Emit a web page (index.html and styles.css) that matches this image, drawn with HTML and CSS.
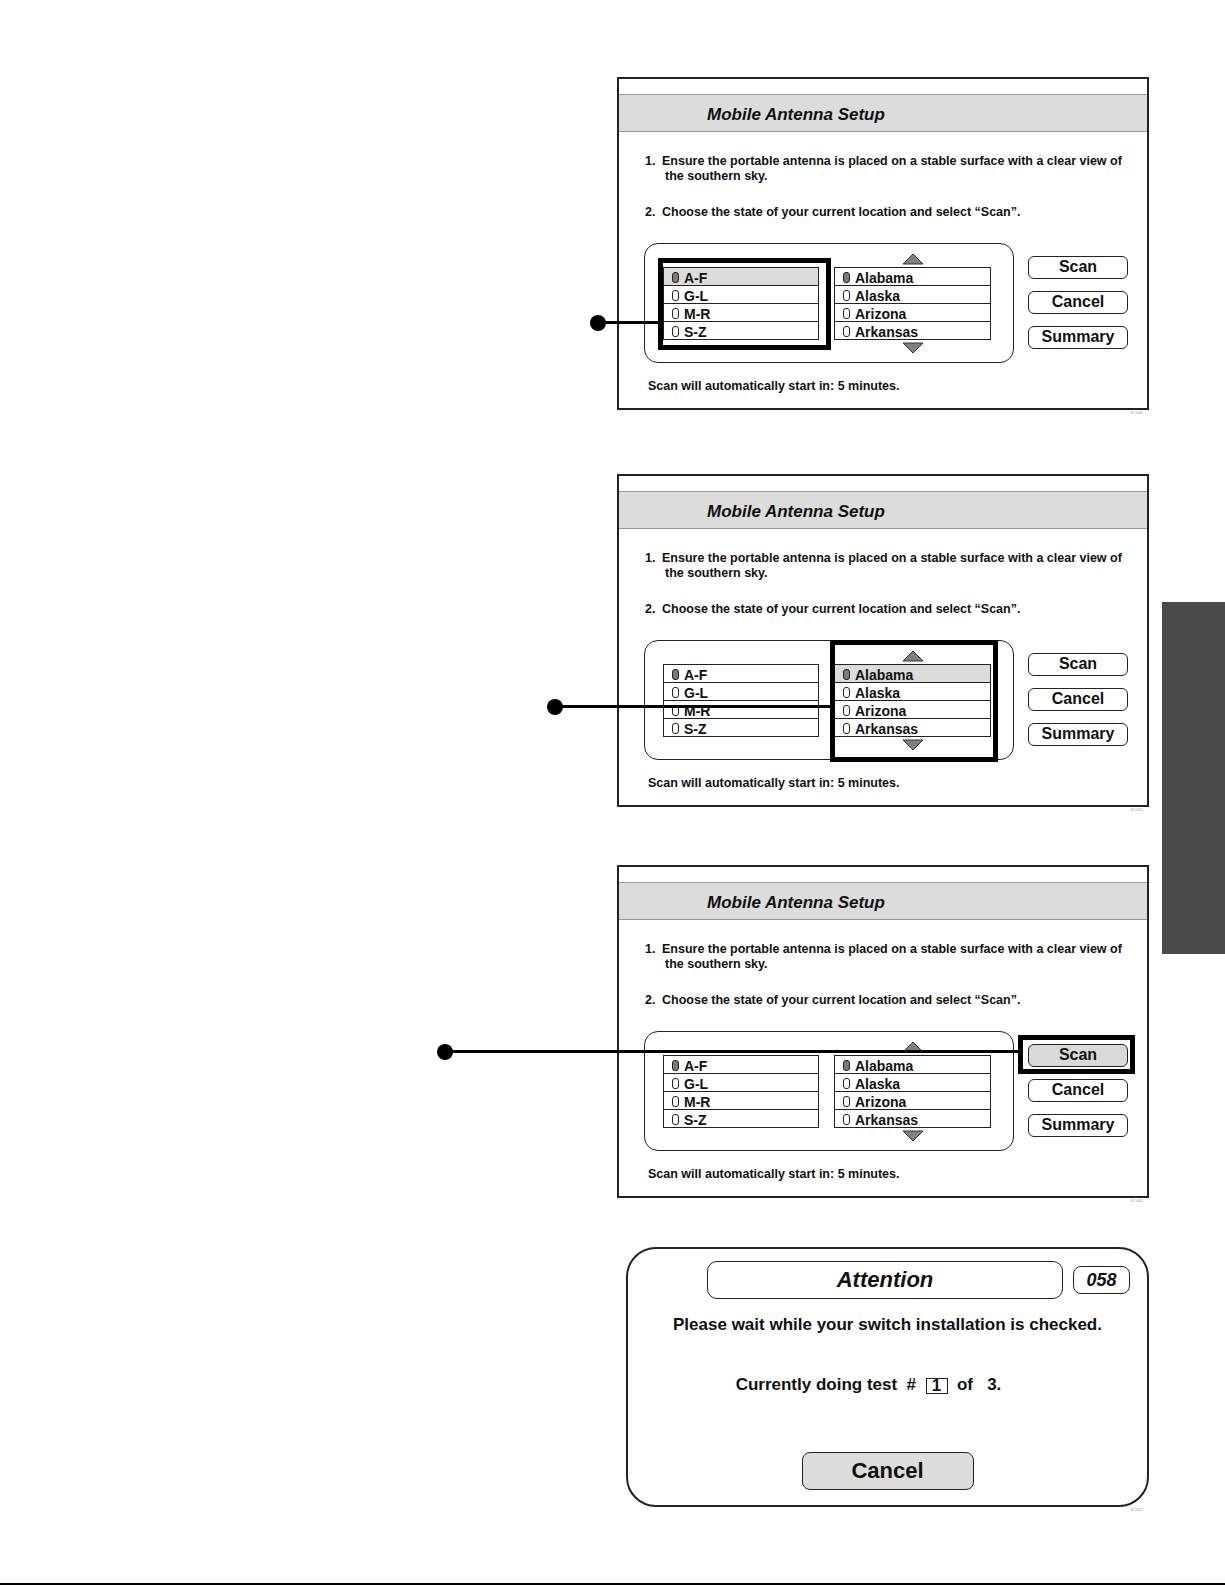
FILE: index.html
```html
<!DOCTYPE html>
<html lang="en">
<head>
  <meta charset="UTF-8" />
  <title>Mobile Antenna Setup</title>
  <link rel="stylesheet" href="styles.css">
</head>
<body>
  <div class="page">
    <div class="content">

      <!-- step 1: choose the letter range -->
      <div class="figure first">
        <div class="screen">
          <div class="callout callout-range"></div>
          <div class="band">Mobile Antenna Setup</div>
          <div class="steps">
            <div class="step"><span class="num">1.</span><span>Ensure the portable antenna is placed on a stable surface with a clear view of<br><span class="wrap">the southern sky.</span></span></div>
            <div class="step gap"><span class="num">2.</span><span>Choose the state of your current location and select “Scan”.</span></div>
          </div>
          <div class="work">
            <div class="picker">
              <div class="list ranges">
                <div class="mark mark-ranges"></div>
                <div class="row active"><i class="dot on"></i>A-F</div>
                <div class="row"><i class="dot"></i>G-L</div>
                <div class="row"><i class="dot"></i>M-R</div>
                <div class="row"><i class="dot"></i>S-Z</div>
              </div>
              <div class="states">
                <svg class="arrow" width="22" height="12" viewBox="0 0 22 12"><polygon points="1,11 11,1 21,11" /></svg>
                <div class="list">
                  <div class="row"><i class="dot on"></i>Alabama</div>
                  <div class="row"><i class="dot"></i>Alaska</div>
                  <div class="row"><i class="dot"></i>Arizona</div>
                  <div class="row"><i class="dot"></i>Arkansas</div>
                </div>
                <svg class="arrow" width="22" height="12" viewBox="0 0 22 12"><polygon points="1,1 21,1 11,11" /></svg>
              </div>
            </div>
            <div class="actions">
              <div class="btn">Scan</div>
              <div class="btn">Cancel</div>
              <div class="btn">Summary</div>
            </div>
          </div>
          <div class="timer">Scan will automatically start in: 5 minutes.</div>
        </div>
        <div class="tag">KC060</div>
      </div>

      <!-- step 2: choose the state -->
      <div class="figure second">
        <div class="screen">
          <div class="callout callout-state"></div>
          <div class="band">Mobile Antenna Setup</div>
          <div class="steps">
            <div class="step"><span class="num">1.</span><span>Ensure the portable antenna is placed on a stable surface with a clear view of<br><span class="wrap">the southern sky.</span></span></div>
            <div class="step gap"><span class="num">2.</span><span>Choose the state of your current location and select “Scan”.</span></div>
          </div>
          <div class="work">
            <div class="picker">
              <div class="list ranges">
                <div class="row"><i class="dot on"></i>A-F</div>
                <div class="row"><i class="dot"></i>G-L</div>
                <div class="row"><i class="dot"></i>M-R</div>
                <div class="row"><i class="dot"></i>S-Z</div>
              </div>
              <div class="states">
                <div class="mark mark-states"></div>
                <svg class="arrow" width="22" height="12" viewBox="0 0 22 12"><polygon points="1,11 11,1 21,11" /></svg>
                <div class="list">
                  <div class="row active"><i class="dot on"></i>Alabama</div>
                  <div class="row"><i class="dot"></i>Alaska</div>
                  <div class="row"><i class="dot"></i>Arizona</div>
                  <div class="row"><i class="dot"></i>Arkansas</div>
                </div>
                <svg class="arrow" width="22" height="12" viewBox="0 0 22 12"><polygon points="1,1 21,1 11,11" /></svg>
              </div>
            </div>
            <div class="actions">
              <div class="btn">Scan</div>
              <div class="btn">Cancel</div>
              <div class="btn">Summary</div>
            </div>
          </div>
          <div class="timer">Scan will automatically start in: 5 minutes.</div>
        </div>
        <div class="tag">KC061</div>
      </div>

      <!-- step 3: press scan -->
      <div class="figure third">
        <div class="screen">
          <div class="callout callout-scan"></div>
          <div class="band">Mobile Antenna Setup</div>
          <div class="steps">
            <div class="step"><span class="num">1.</span><span>Ensure the portable antenna is placed on a stable surface with a clear view of<br><span class="wrap">the southern sky.</span></span></div>
            <div class="step gap"><span class="num">2.</span><span>Choose the state of your current location and select “Scan”.</span></div>
          </div>
          <div class="work">
            <div class="picker">
              <div class="list ranges">
                <div class="row"><i class="dot on"></i>A-F</div>
                <div class="row"><i class="dot"></i>G-L</div>
                <div class="row"><i class="dot"></i>M-R</div>
                <div class="row"><i class="dot"></i>S-Z</div>
              </div>
              <div class="states">
                <svg class="arrow" width="22" height="12" viewBox="0 0 22 12"><polygon points="1,11 11,1 21,11" /></svg>
                <div class="list">
                  <div class="row"><i class="dot on"></i>Alabama</div>
                  <div class="row"><i class="dot"></i>Alaska</div>
                  <div class="row"><i class="dot"></i>Arizona</div>
                  <div class="row"><i class="dot"></i>Arkansas</div>
                </div>
                <svg class="arrow" width="22" height="12" viewBox="0 0 22 12"><polygon points="1,1 21,1 11,11" /></svg>
              </div>
            </div>
            <div class="actions">
              <div class="btn pressed"><div class="mark mark-scan"></div>Scan</div>
              <div class="btn">Cancel</div>
              <div class="btn">Summary</div>
            </div>
          </div>
          <div class="timer">Scan will automatically start in: 5 minutes.</div>
        </div>
        <div class="tag">KC062</div>
      </div>

      <!-- switch check -->
      <div class="figure">
        <div class="notice">
          <div class="notice-head">
            <div class="notice-title">Attention</div>
            <div class="notice-code">058</div>
          </div>
          <div class="notice-msg">Please wait while your switch installation is checked.</div>
          <div class="notice-test">Currently doing test&nbsp; #&nbsp; <span class="count">1</span>&nbsp; of &nbsp; 3.</div>
          <div class="notice-btn">Cancel</div>
        </div>
        <div class="tag">KC052</div>
      </div>

    </div>
    <div class="side">
      <div class="thumb"></div>
    </div>
  </div>
</body>
</html>
```

FILE: styles.css
```css
body {
  margin: 0;
  font-family: "Liberation Sans", Arial, sans-serif;
  color: #111;
  background: #fff;
}
.page {
  display: flex;
  width: 1225px;
  height: 1585px;
  box-sizing: border-box;
  border-bottom: 2px solid #000;
}
.content {
  flex: 1;
  padding: 77px 0 0 617px;
}
.side {
  width: 63px;
}
.thumb {
  margin-top: 602px;
  height: 352px;
  background: #4a4a4a;
}

.figure.first { margin-bottom: 58px; }
.figure.second { margin-bottom: 52px; }
.figure.third { margin-bottom: 43px; }

.tag {
  width: 532px;
  text-align: right;
  font-size: 4px;
  line-height: 6px;
  color: #999;
  padding-right: 6px;
  box-sizing: border-box;
}

/* tv screen */
.screen {
  position: relative;
  width: 532px;
  height: 333px;
  box-sizing: border-box;
  border: 2px solid #222;
  padding-top: 15px;
}
.band {
  height: 38px;
  box-sizing: border-box;
  border-top: 1px solid #999;
  border-bottom: 1px solid #999;
  background: #dcdcdc;
  padding: 3px 0 0 88px;
  font-size: 17px;
  font-weight: bold;
  font-style: italic;
  line-height: 33px;
}
.steps {
  padding: 22px 0 0 26px;
  font-size: 12.5px;
  font-weight: bold;
  line-height: 15px;
}
.step {
  display: flex;
}
.step.gap {
  margin-top: 21px;
}
.num {
  width: 17px;
  flex: none;
}
.wrap {
  padding-left: 3px;
}

.work {
  display: flex;
  align-items: flex-start;
  margin: 23px 0 0 25px;
}
.picker {
  position: relative;
  display: flex;
  align-items: center;
  gap: 15px;
  width: 370px;
  height: 120px;
  box-sizing: border-box;
  border: 1.5px solid #222;
  border-radius: 14px;
  padding-left: 18px;
}
.states {
  position: relative;
  display: flex;
  flex-direction: column;
  align-items: center;
  gap: 2px;
}
.arrow polygon {
  fill: #808080;
  stroke: #333;
  stroke-width: 1;
}
.list {
  position: relative;
  width: 157px;
  box-sizing: border-box;
  border: 1px solid #222;
}
.ranges {
  width: 156px;
}
.row {
  display: flex;
  align-items: center;
  height: 14px;
  padding: 3px 0 0 8px;
  font-size: 14px;
  font-weight: bold;
  line-height: 14px;
}
.row + .row {
  border-top: 1.5px solid #222;
}
.row.active {
  background: #dcdcdc;
}
.dot {
  flex: none;
  width: 5px;
  height: 9px;
  border: 1.5px solid #222;
  border-radius: 3px;
  margin: -1px 5px 0 0;
  background: #fff;
}
.dot.on {
  background: #7a7a7a;
}

.actions {
  display: flex;
  flex-direction: column;
  gap: 12px;
  margin: 13px 0 0 14px;
}
.btn {
  position: relative;
  width: 100px;
  height: 23px;
  box-sizing: border-box;
  border: 1.5px solid #222;
  border-radius: 6px;
  text-align: center;
  font-size: 16px;
  font-weight: bold;
  line-height: 20px;
}
.btn.pressed {
  background: #d9d9d9;
}

.timer {
  padding: 16px 0 0 29px;
  font-size: 12.5px;
  font-weight: bold;
  line-height: 15px;
}

/* highlight frames and callouts */
.mark {
  position: absolute;
  border: 5px solid #000;
  z-index: 2;
}
.mark-ranges { left: -6px; right: -13px; top: -10px; bottom: -11px; }
.mark-states { left: -4px; right: -7px; top: -10px; bottom: -11px; }
.mark-scan { left: -11px; right: -8px; top: -10px; bottom: -8px; }

.callout {
  position: absolute;
  height: 3px;
  background: #000;
  z-index: 3;
}
.callout::before {
  content: "";
  position: absolute;
  left: -8px;
  top: -6.5px;
  width: 16px;
  height: 16px;
  border-radius: 50%;
  background: #000;
}
.callout-range { left: -21px; width: 61px; top: 242px; }
.callout-state { left: -64px; width: 277px; top: 229px; }
.callout-scan { left: -174px; width: 573px; top: 183px; }

/* attention dialog */
.notice {
  width: 523px;
  height: 260px;
  box-sizing: border-box;
  margin-left: 9px;
  border: 2px solid #222;
  border-radius: 30px;
  padding-top: 12px;
  text-align: center;
  font-weight: bold;
}
.notice-head {
  display: flex;
  align-items: center;
  gap: 10px;
  padding-left: 79px;
}
.notice-title {
  width: 356px;
  height: 38px;
  box-sizing: border-box;
  border: 1.5px solid #222;
  border-radius: 10px;
  font-size: 22px;
  font-style: italic;
  line-height: 36px;
}
.notice-code {
  width: 57px;
  height: 28px;
  box-sizing: border-box;
  border: 1.5px solid #222;
  border-radius: 8px;
  font-size: 18px;
  font-style: italic;
  line-height: 26px;
}
.notice-msg {
  margin-top: 16px;
  font-size: 17px;
  line-height: 20px;
}
.notice-test {
  margin-top: 40px;
  padding-right: 38px;
  font-size: 17px;
  line-height: 20px;
}
.count {
  display: inline-block;
  width: 22px;
  height: 16px;
  box-sizing: border-box;
  border: 1.5px solid #222;
  line-height: 14px;
  vertical-align: -1px;
}
.notice-btn {
  width: 172px;
  height: 38px;
  box-sizing: border-box;
  margin: 57px auto 0;
  border: 1.5px solid #222;
  border-radius: 8px;
  background: #dcdcdc;
  font-size: 22px;
  line-height: 35px;
}
```
